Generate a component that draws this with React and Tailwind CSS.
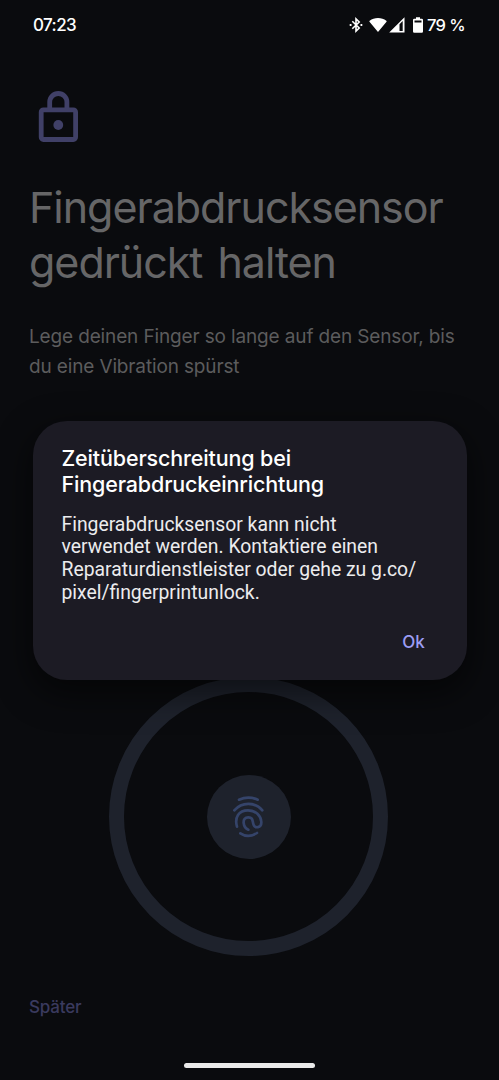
function StatusBar() {
    return (
        <header className="flex items-center justify-between h-[50px] pl-[33px] pr-[34px] pt-px text-white text-[17px] font-medium">
            <span className="tracking-[-0.6px]">07:23</span>

            <div className="flex items-center">
                {/* Bluetooth */}
                <svg className="w-[14px] h-4 -mt-px" viewBox="0 0 14 16" fill="none" stroke="currentColor" strokeWidth="1.6">
                    <path d="M3.3 4.2 10.2 11 7 14.1V1.9L10.2 5 3.3 11.8" />
                    <path d="M.7 8h1.8M11.5 8h1.8" strokeWidth="1.9" />
                </svg>
                {/* Wifi */}
                <svg className="w-[18px] h-4 ml-1.5 -mt-px" viewBox="0 0 19 16" fill="currentColor">
                    <path d="M9.5 15.4.5 4.6C.2 4.2.3 3.8.7 3.500 3.200 1.500 6.1.5 9.5.5s6.300 1 8.800 3c.4.3.5.7.2 1.100z" />
                </svg>
                {/* Mobile signal */}
                <svg className="w-4 h-4 ml-0.5 -mt-px" viewBox="0 0 16 16" fill="currentColor">
                    <path fillRule="evenodd" d="M.2 15.600 15.500.300V15.600zM10.500 7.300V14H13.700V4.100z" />
                </svg>
                {/* Battery */}
                <svg className="w-2.5 h-4 ml-2 -mt-px" viewBox="0 0 10 16" fill="currentColor">
                    <path fillRule="evenodd" d="M3 .3h4v1.500h1.800q1.200 0 1.200 1.200V14.500q0 1.200-1.200 1.200H1.200Q0 15.700 0 14.500V3q0-1.200 1.200-1.200H3zM1.500 3.400V5.600H8.500V3.400z" />
                </svg>
                <span className="ml-1 text-[16.500px] tracking-[-0.6px]">79 %</span>
            </div>
        </header>
    )
}

function LockIcon() {
    return (
        <svg className="w-10 h-[52px]" viewBox="0 0 40 52" fill="none" stroke="currentColor" strokeWidth="4.8">
            <rect x="3.200" y="18.900" width="34.400" height="29.600" rx="2.200" />
            <path d="M11.700 18.500V11.100a8.600 8.600 0 0 1 17.200 0V18.500" />
            <circle cx="20.300" cy="34" r="4.900" fill="currentColor" stroke="none" />
        </svg>
    )
}

function FingerprintIcon() {
    return (
        <svg className="w-8 h-11" viewBox="1 0 96 132" fill="none" stroke="currentColor" strokeWidth="8" strokeLinecap="round">
            <path d="M19 14Q47 2 75 14" />
            <path d="M5 46C27 20 67 20 89 46" />
            <path d="M13 95C5 67 18 46 46 46C69 46 85 62 86 81C87 99 66 102 62 87C59 77 61 67 47 67C37 67 32 74 33 84C34 94 39 101 47 104" />
            <path d="M23 115Q47 131 73 114" />
        </svg>
    )
}

function TimeoutDialog() {
    return (
        <div role="dialog" className="absolute left-[32.500px] top-[420.500px] w-[434px] h-[259.500px] rounded-[34px] bg-[#1c1b24] px-[29px] pt-[24px] text-white shadow-[0_12px_32px_4px_rgba(0,0,0,0.5)]">
            <h2 className="text-[21.500px] leading-[26.500px] font-medium tracking-[-0.15px]">
                Zeitüberschreitung bei
                <br />
                Fingerabdruckeinrichtung
            </h2>
            <p className="mt-[16px] font-[Roboto,sans-serif] text-[19.350px] leading-[22.700px] text-[#ececee]">
                Fingerabdrucksensor kann nicht
                <br />
                verwendet werden. Kontaktiere einen
                <br />
                Reparaturdienstleister oder gehe zu g.co/
                <br />
                pixel/fingerprintunlock.
            </p>
            <div className="flex justify-end mt-[26px] pr-[13px]">
                <button className="text-[17px] leading-6 font-medium tracking-[-0.2px] text-[#9c9df4]">Ok</button>
            </div>
        </div>
    )
}

export default function App() {
    return (
        <div className="relative w-[499px] h-[1080px] overflow-hidden bg-[#0a0b0e] font-[Inter,sans-serif] flex flex-col">
            <StatusBar />

            <main className="flex-1 flex flex-col px-[29px] pt-[41px]">
                <div className="pl-[9px] text-[#404067]">
                    <LockIcon />
                </div>
                <h1 className="mt-[37px] text-[43px] leading-[54.500px] text-[#666667] tracking-[-1.03px] [word-spacing:4px] whitespace-nowrap">
                    Fingerabdrucksensor
                    <br />
                    gedrückt halten
                </h1>
                <p className="mt-[33px] text-[19px] leading-[29.500px] text-[#5c5c5d] tracking-[-0.14px] whitespace-nowrap">
                    Lege deinen Finger so lange auf den Sensor, bis
                    <br />
                    du eine Vibration spürst
                </p>

                {/* Enrollment progress ring */}
                <div className="mt-[296px] self-center w-[279px] h-[279px] mr-[2px] shrink-0 rounded-full border-[15px] border-[#1e222c] flex items-center justify-center">
                    <div className="w-[84px] h-[84px] rounded-full bg-[#1e222c] text-[#35446a] flex items-center justify-center">
                        <FingerprintIcon />
                    </div>
                </div>

                <button className="self-start mt-[39px] text-[17px] leading-6 font-medium tracking-[-0.2px] text-[#3a3a5e]">Später</button>
            </main>

            <div className="self-center mb-3 w-[131px] h-[5px] rounded-full bg-[#eaeaea]" />

            <TimeoutDialog />
        </div>
    )
}
